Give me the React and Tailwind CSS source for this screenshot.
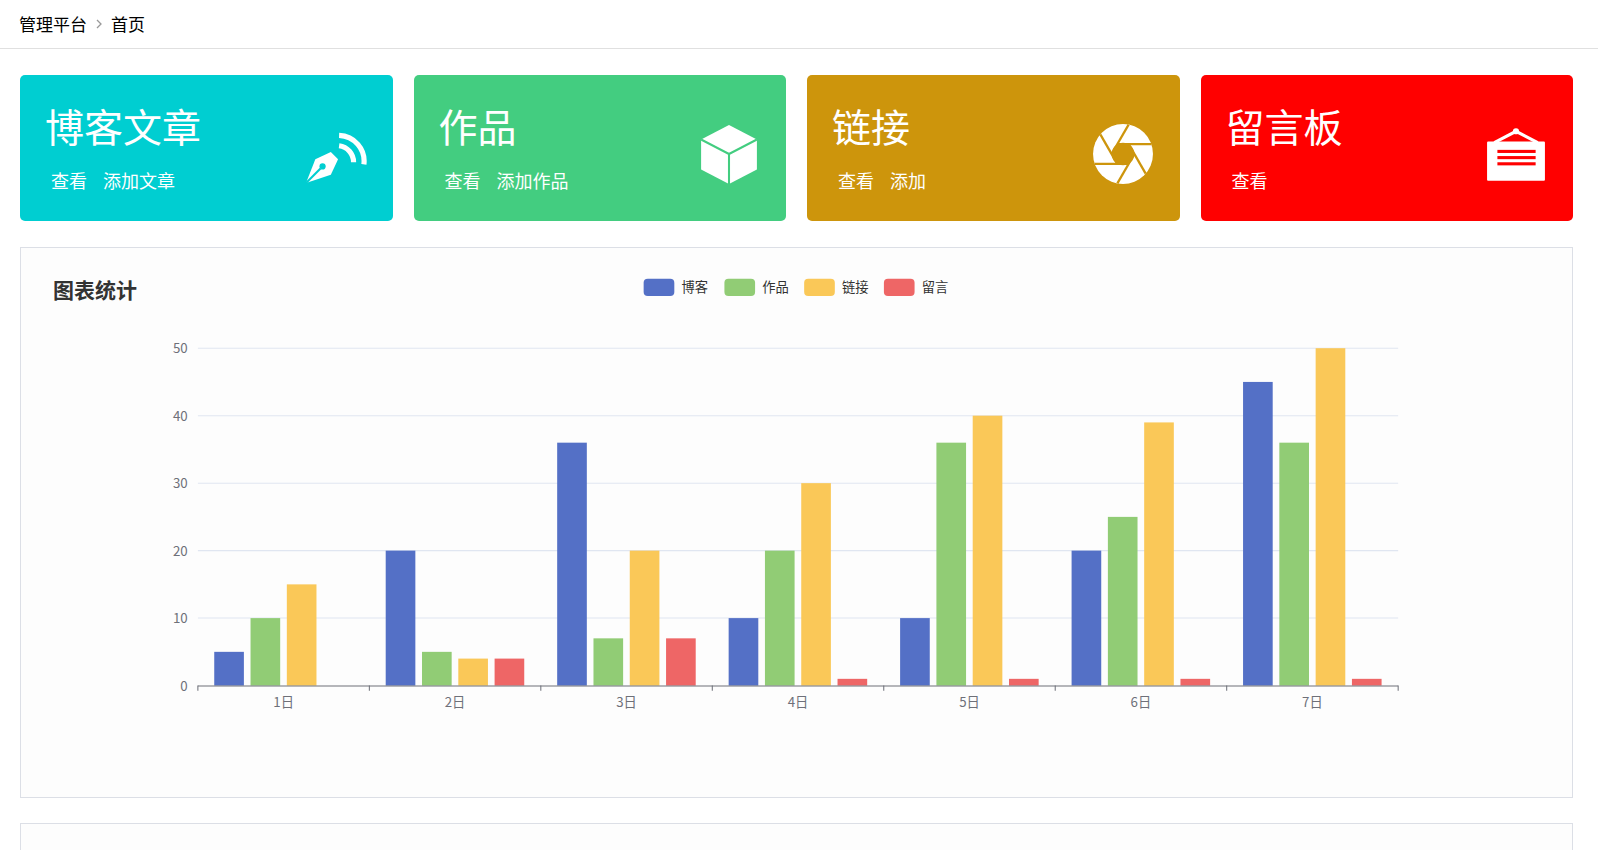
import React from "react";

const font = { fontFamily: '"Microsoft YaHei","Noto Sans CJK SC",sans-serif' };

function PenIcon() {
  return (
    <svg width="62" height="62" viewBox="0 0 60 60" fill="none">
      <path d="M33 12 A25 25 0 0 1 57 40" stroke="white" strokeWidth="5" />
      <path d="M33 22 A16 16 0 0 1 47 38" stroke="white" strokeWidth="5" />
      <path d="M1 58 L10 35 L25 28 L32 35 L25 50 Z" fill="white" />
      <path d="M1 58 L15 44" stroke="#00ced1" strokeWidth="2" />
      <circle cx="17" cy="42" r="3" fill="#00ced1" />
    </svg>
  );
}

function CubeIcon() {
  return (
    <svg width="62" height="62" viewBox="0 0 60 60">
      <path d="M30 2 L57 16 L57 45 L30 59 L3 45 L3 16 Z" fill="white" />
      <path d="M3 16 L30 30 L57 16 M30 30 L30 59" stroke="#43cd80" strokeWidth="2" fill="none" />
    </svg>
  );
}

function ApertureIcon() {
  const r = 11, R = 29;
  const lines = Array.from({ length: 6 }).map((_, k) => {
    const a = (k * 60 * Math.PI) / 180;
    const b = ((k - 1) * 60 * Math.PI) / 180;
    const V = [r * Math.cos(a), r * Math.sin(a)];
    const U = [r * Math.cos(b), r * Math.sin(b)];
    let d = [V[0] - U[0], V[1] - U[1]];
    const L = Math.hypot(d[0], d[1]);
    d = [d[0] / L, d[1] / L];
    const pd = V[0] * d[0] + V[1] * d[1];
    const t = -pd + Math.sqrt(pd * pd - (r * r - R * R));
    return [U[0] + 30, U[1] + 30, V[0] + t * d[0] + 30, V[1] + t * d[1] + 30];
  });
  return (
    <svg width="62" height="62" viewBox="0 0 60 60">
      <circle cx="30" cy="30" r="29" fill="white" />
      <g stroke="#cd950c" strokeWidth="2.2">
        {lines.map((l, i) => (
          <line key={i} x1={l[0]} y1={l[1]} x2={l[2]} y2={l[3]} />
        ))}
      </g>
      <circle cx="30" cy="30" r="11" fill="#cd950c" />
    </svg>
  );
}

function BoardIcon() {
  return (
    <svg width="62" height="62" viewBox="0 0 60 60">
      <path d="M9 19 L30 8 L51 19" stroke="white" strokeWidth="3" fill="none" />
      <circle cx="30" cy="8" r="3" fill="white" />
      <rect x="2" y="18" width="56" height="38" rx="1" fill="white" />
      <rect x="12" y="26" width="37" height="3" fill="red" />
      <rect x="12" y="32" width="37" height="3" fill="red" />
      <rect x="12" y="38" width="37" height="3" fill="red" />
    </svg>
  );
}

const cards = [
  { title: "博客文章", links: ["查看", "添加文章"], bg: "bg-[#00ced1]", icon: <PenIcon /> },
  { title: "作品", links: ["查看", "添加作品"], bg: "bg-[#43cd80]", icon: <CubeIcon /> },
  { title: "链接", links: ["查看", "添加"], bg: "bg-[#cd950c]", icon: <ApertureIcon /> },
  { title: "留言板", links: ["查看"], bg: "bg-[#ff0000]", icon: <BoardIcon /> },
];

const series = [
  { name: "博客", color: "#5470c6", data: [5, 20, 36, 10, 10, 20, 45] },
  { name: "作品", color: "#91cc75", data: [10, 5, 7, 20, 36, 25, 36] },
  { name: "链接", color: "#fac858", data: [15, 4, 20, 30, 40, 39, 50] },
  { name: "留言", color: "#ee6666", data: [0, 4, 7, 1, 1, 1, 1] },
];

function Chart() {
  const ox = 20, oy = 242;
  const x0 = 192 - ox, x1 = 1366 - ox, y0 = 670 - oy, unit = 6.6;
  const cw = (x1 - x0) / 7;
  const legendX = [628, 707, 785, 863];
  return (
    <svg width="1552" height="548" viewBox="0 0 1516 536" className="block" style={font}>
      {series.map((s, i) => (
        <g key={s.name}>
          <rect x={legendX[i] - ox} y={272 - oy} width="30" height="17" rx="4" fill={s.color} />
          <text x={legendX[i] - ox + 37} y={285 - oy} fontSize="13" fill="#333">{s.name}</text>
        </g>
      ))}
      {[0, 10, 20, 30, 40, 50].map((v) => (
        <g key={v}>
          {v > 0 && <line x1={x0} x2={x1} y1={y0 - v * unit} y2={y0 - v * unit} stroke="#e0e6f1" />}
          <text x={x0 - 10} y={y0 - v * unit + 5} fontSize="13" fill="#6e7079" textAnchor="end">{v}</text>
        </g>
      ))}
      {series.map((s, si) =>
        s.data.map((d, ci) => (
          <rect key={si + "-" + ci} x={x0 + ci * cw + 16 + si * 35.5} y={y0 - d * unit} width="29" height={d * unit} fill={s.color} />
        ))
      )}
      <line x1={x0} x2={x1} y1={y0 + 0.5} y2={y0 + 0.5} stroke="#6e7079" />
      {Array.from({ length: 8 }).map((_, i) => (
        <line key={i} x1={x0 + i * cw} x2={x0 + i * cw} y1={y0} y2={y0 + 5} stroke="#6e7079" />
      ))}
      {Array.from({ length: 7 }).map((_, i) => (
        <text key={i} x={x0 + i * cw + cw / 2} y={y0 + 21} fontSize="13" fill="#6e7079" textAnchor="middle">{i + 1}日</text>
      ))}
    </svg>
  );
}

export default function App() {
  return (
    <div className="bg-white min-h-[1100px]" style={font}>
      <div className="h-[49px] border-b border-[#e0e0e0] flex items-center px-[19px] text-[17px] text-black mr-[6px]">
        <span>管理平台</span>
        <svg width="14" height="14" viewBox="0 0 14 14" className="mx-[5px]">
          <path d="M5 3 L9 7 L5 11" stroke="#999" strokeWidth="1.3" fill="none" />
        </svg>
        <span>首页</span>
      </div>
      <div className="pl-[20px] pr-[31px]">
        <div className="grid grid-cols-4 gap-[21px] mt-[26px]">
          {cards.map((c) => (
            <div key={c.title} className={`${c.bg} h-[146px] rounded-[5px] flex items-center justify-between pl-[25px] pr-[26px] text-white`}>
              <div>
                <div className="text-[39px] leading-[48px] mt-[-2px]">{c.title}</div>
                <div className="flex gap-[16px] text-[18px] mt-[18px] pl-[6px]">
                  {c.links.map((l) => <span key={l}>{l}</span>)}
                </div>
              </div>
              <div className="mt-[12px]">{c.icon}</div>
            </div>
          ))}
        </div>
        <div className="relative mt-[26px] border border-[#dcdfe6] h-[551px] bg-[#fdfdfd]">
          <div className="absolute left-[32px] top-[26px] text-[21px] font-bold text-[#333]">图表统计</div>
          <Chart />
        </div>
        <div className="mt-[25px] border border-[#dcdfe6] h-[200px] bg-[#fdfdfd]"></div>
      </div>
    </div>
  );
}
